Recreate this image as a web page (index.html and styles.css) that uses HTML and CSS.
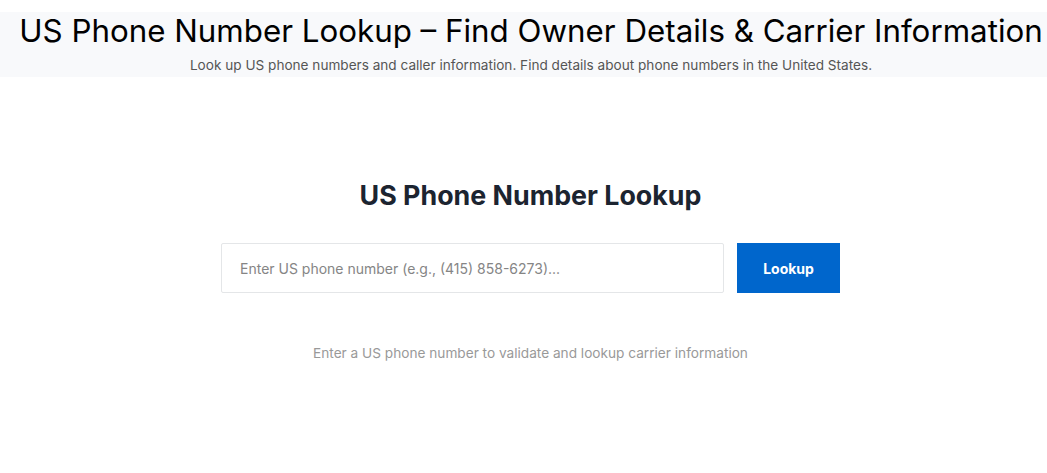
FILE: index.html
```html
<!DOCTYPE html>
<html lang="en">
<head>
<meta charset="utf-8">
<title>US Phone Number Lookup</title>
<link rel="stylesheet" href="styles.css">
</head>
<body>
<header class="hero">
  <h1 class="hero-title">US Phone Number Lookup – Find Owner Details &amp; Carrier Information</h1>
  <p class="hero-sub">Look up US phone numbers and caller information. Find details about phone numbers in the United States.</p>
</header>
<main class="lookup">
  <h2 class="lookup-title">US Phone Number Lookup</h2>
  <form class="lookup-form">
    <input class="lookup-input" type="text" placeholder="Enter US phone number (e.g., (415) 858-6273)...">
    <button class="lookup-btn" type="button">Lookup</button>
  </form>
  <p class="lookup-hint">Enter a US phone number to validate and lookup carrier information</p>
</main>
</body>
</html>
```
FILE: styles.css
```css
* { box-sizing: border-box; }
html, body { margin: 0; padding: 0; background: #fff; }
body {
  font-family: Inter, "Open Sans", Arial, sans-serif;
  color: #1f2933;
  overflow: hidden;
}
.hero {
  margin-top: 12px;
  background: #f8f9fb;
  height: 65px;
  display: flex;
  flex-direction: column;
  align-items: center;
  padding-left: 15px;
  white-space: nowrap;
}
.hero-title {
  margin: 1px 0 0;
  font-size: 31.3px;
  font-weight: 400;
  color: #000;
  line-height: 36px;
}
.hero-sub {
  margin: 7px 0 0;
  font-size: 13.6px;
  color: #555;
  line-height: 18px;
}
.lookup {
  display: flex;
  flex-direction: column;
  align-items: center;
  padding-left: 14px;
  padding-top: 102px;
}
.lookup-title {
  margin: 0;
  font-size: 26.8px;
  font-weight: 700;
  color: #1c2430;
  line-height: 32px;
}
.lookup-form {
  display: flex;
  gap: 13px;
  margin-top: 32px;
}
.lookup-input {
  width: 503px;
  height: 50px;
  border: 1px solid #e4e6e8;
  border-radius: 2px;
  padding: 0 18px;
  font-family: inherit;
  font-size: 14px;
  color: #333;
  outline: none;
}
.lookup-input::placeholder { color: #858585; }
.lookup-btn {
  width: 103px;
  height: 50px;
  border: 0;
  background: #0066cc;
  color: #fff;
  font-family: inherit;
  font-size: 14px;
  font-weight: 700;
}
.lookup-hint {
  margin: 52px 0 0;
  font-size: 13.65px;
  color: #999;
}
```
